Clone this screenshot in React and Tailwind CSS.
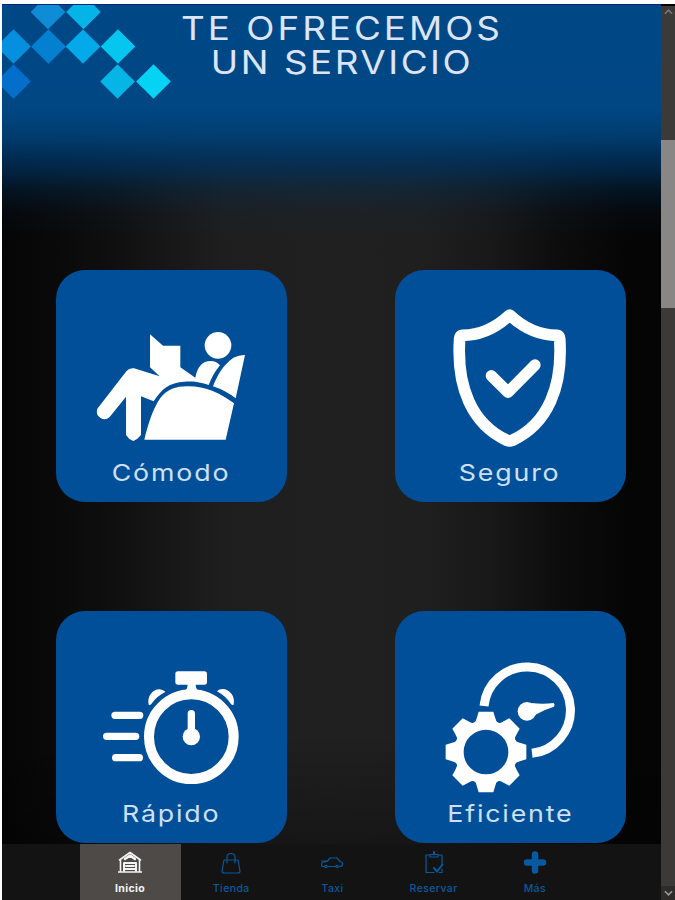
const diamonds = [
  { x: 46, y: 8, color: "#0e8dd6" },
  { x: 81.5, y: 8, color: "#04b4e6" },
  { x: 11.5, y: 42.5, color: "#0490de" },
  { x: 46.5, y: 42.5, color: "#0480d0" },
  { x: 81, y: 42.5, color: "#04a9ea" },
  { x: 116, y: 42.5, color: "#04c6ee" },
  { x: 11.5, y: 77.5, color: "#046fcb" },
  { x: 115.5, y: 77.5, color: "#04b5e6" },
  { x: 151.5, y: 77.5, color: "#04d3f3" },
];

const teeth = [0, 45, 90, 135, 180, 225, 270, 315];

function ComfortIcon() {
  return (
    <svg viewBox="17 30 693 564" className="block h-[188px] w-[231px]" fill="#fff">
      <circle cx="503" cy="256" r="40" />
      <path d="M299 223 L338 257 H390 V322 L435 353 C441 320 457 303 480 303 C494 303 504 309 509 316 C494 333 484 353 475 375 C445 365 425 364 402 365 C358 367 332 388 310 424 L272 409 V525 Q263 537 249 543 Q234 537 227 525 V410 L178 471 A23 23 0 0 1 141 446 L228 334 Q237 323 251 325 L328 349 L299 322 Z" />
      <path d="M584 285 Q568 284 549 293 C517 316 501 346 488 379 Q525 391 556 415 Z" />
      <path d="M282 539 C292 497 306 449 330 414 C350 388 377 379 410 379 C465 378 510 400 551 430 L526 539 Z" />
    </svg>
  );
}

function ShieldIcon() {
  return (
    <svg
      viewBox="14 30 693 564"
      className="block h-[188px] w-[231px]"
      fill="none"
      stroke="#fff"
      strokeWidth="35"
      strokeLinecap="round"
      strokeLinejoin="round"
    >
      <path d="M358 165 Q293 226 216 226 Q209 226 208 236 C198 380 244 492 350 541 Q358 545 366 541 C472 492 518 380 508 236 Q507 226 500 226 Q423 226 358 165 Z" />
      <path d="M303 347 L353 397 L434 315" strokeWidth="34" />
    </svg>
  );
}

function StopwatchIcon() {
  return (
    <svg viewBox="17 30 693 564" className="block h-[188px] w-[231px]" fill="#fff">
      <rect x="375" y="211" width="95" height="40" rx="8" />
      <path d="M412 248 H436 Q436 266 448 273 H400 Q412 266 412 248 Z" />
      <circle cx="423" cy="407" r="127" fill="none" stroke="#fff" strokeWidth="30" />
      <path d="M295 311 C287 276 325 251 345 273 Q318 286 303 309 Q299 314 295 311 Z" />
      <path d="M550 311 C558 276 520 251 500 271 Q527 286 542 309 Q546 314 550 311 Z" />
      <path d="M423 338 V407" stroke="#fff" strokeWidth="22" strokeLinecap="round" />
      <circle cx="423" cy="407" r="26" />
      <path
        d="M194 343 H268 M169 406 H256 M196 470 H267"
        stroke="#fff"
        strokeWidth="22"
        strokeLinecap="round"
      />
    </svg>
  );
}

function GaugeIcon() {
  return (
    <svg viewBox="14 30 693 564" className="block h-[188px] w-[231px]" fill="#fff">
      <path
        d="M281 315 A130 130 0 1 1 425 457"
        fill="none"
        stroke="#fff"
        strokeWidth="27"
      />
      <path d="M423 306 Q458 310 490 306 Q495 311 491 317 Q460 326 434 342 Z" />
      <circle cx="410" cy="331" r="28" />
      <g transform="translate(287 453)">
        <circle r="81" fill="none" stroke="#fff" strokeWidth="28" />
        {teeth.map((angle) => (
          <path
            key={angle}
            transform={`rotate(${angle})`}
            d="M-38 -84 Q-30 -90 -27 -104 L-22 -121 H22 L27 -104 Q30 -90 38 -84 Z"
          />
        ))}
      </g>
    </svg>
  );
}

const services = [
  { label: "Cómodo", icon: <ComfortIcon /> },
  { label: "Seguro", icon: <ShieldIcon /> },
  { label: "Rápido", icon: <StopwatchIcon /> },
  { label: "Eficiente", icon: <GaugeIcon /> },
];

const tabs = [
  {
    label: "Inicio",
    active: true,
    icon: (
      <g strokeWidth="1.6">
        <path d="M1.5 9 L12 1.5 L22.5 9 M2.5 8 V20 M21.5 8 V20 M0.5 21 H23.5" />
        <path d="M7 8 L12 4.5 L17 8" strokeWidth="2.5" />
        <path d="M6 20 V12 H18 V20 M8 15 H16 M7 18 H17" strokeWidth="2" />
      </g>
    ),
  },
  {
    label: "Tienda",
    icon: (
      <path d="M5 9 H19 L21 20 Q21 22 19 22 H5 Q3 22 3 20 Z M8 12 V6 Q8 2.5 12 2.5 Q16 2.5 16 6 V12" />
    ),
  },
  {
    label: "Taxi",
    icon: (
      <g>
        <path d="M4 15.5 H2 Q0.500 11.5 4 11 L7 10.5 L10 7 H17 L20 10.5 Q23 11 22.5 14 L21 15.5 H19 M1.500 10 H7 M8 15.5 H15" />
        <circle cx="6" cy="15.5" r="1.2" />
        <circle cx="17" cy="15.5" r="1.2" />
      </g>
    ),
  },
  {
    label: "Reservar",
    icon: (
      <g>
        <path d="M8 4 H4 V21.5 H12 M16 4 H20 V13 M8 3.5 H16 V6 H8 Z M17 21.5 H20 V18" />
        <path d="M12 1 V3.5" strokeWidth="2" />
        <path d="M12 17 L15 20.5 L20.5 13.5" strokeWidth="2" />
      </g>
    ),
  },
  {
    label: "Más",
    icon: <path d="M12 3.5 V19.5 M4 11.5 H20" strokeWidth="6.5" />,
  },
];

export default function App() {
  return (
    <div className="flex h-[900px] w-[675px] overflow-hidden bg-white pt-[4px] pl-[2px] font-[Inter,sans-serif]">
      <main className="flex w-[659px] flex-col bg-[linear-gradient(to_bottom,#004786_0,#004784_105px,#003e73ee_135px,#003566d0_152px,#00305eaa_168px,#00305c55_186px,#00305c1c_206px,#00305c00_232px,#00000000_730px,#0000004d_840px),linear-gradient(to_right,#050505_0,#0a0a0a_60px,#0f0f0f_110px,#171717_165px,#1e1e1e_220px,#202020_320px,#1f1f1f_420px,#181818_490px,#0d0d0d_555px,#050505_625px)]">
        <header className="flex h-[266px] shrink-0 border-t border-[#00247a]">
          <svg className="block h-[100px] w-[170px] shrink-0" viewBox="0 1 170 100">
            {diamonds.map((d) => (
              <path
                key={`${d.x}-${d.y}`}
                transform={`translate(${d.x} ${d.y})`}
                d="M0 -17.3 L17.3 0 L0 17.3 L-17.3 0 Z"
                fill={d.color}
              />
            ))}
          </svg>
          <h1 className="ml-[6px] w-[328px] scale-x-[1.15] pt-[7px] text-center text-[32px] leading-[34px] font-normal whitespace-nowrap text-[#dce4f6]">
            <span className="block tracking-[2.6px]">TE OFRECEMOS</span>
            <span className="block tracking-[2.2px]">UN SERVICIO</span>
          </h1>
        </header>

        <section className="grid grid-cols-[231px_231px] gap-x-[108px] gap-y-[109px] pl-[53.5px]">
          {services.map((service) => (
            <div
              key={service.label}
              className="flex h-[232px] flex-col items-center rounded-[29px] bg-[#004f98]"
            >
              {service.icon}
              <p className="scale-x-[1.14] text-[23.5px] leading-[30px] font-normal tracking-[1.6px] text-[#cde0f5]">
                {service.label}
              </p>
            </div>
          ))}
        </section>

        <nav className="mt-[1px] flex flex-1 bg-[#131313] pl-[77.5px]">
          {tabs.map((tab) => (
            <button
              key={tab.label}
              className={`flex w-[101.2px] flex-col items-center pt-[7px] ${
                tab.active ? "bg-[#4d4a47] text-[#f5f5f5]" : "text-[#075a9f]"
              }`}
            >
              <svg
                viewBox="0 0 24 24"
                className="h-6 w-6"
                fill="none"
                stroke="currentColor"
                strokeWidth="1.2"
                strokeLinecap="round"
                strokeLinejoin="round"
              >
                {tab.icon}
              </svg>
              <span
                className={`mt-[7px] text-[10.5px] leading-[14px] tracking-[0.4px] ${
                  tab.active ? "font-bold" : "font-medium"
                }`}
              >
                {tab.label}
              </span>
            </button>
          ))}
        </nav>
      </main>

      <div className="flex w-[14px] flex-col bg-[#3c3a38]">
        <div className="flex h-[14px] items-center justify-center border-t-2 border-black">
          <svg viewBox="0 0 10 6" className="h-[6px] w-[9px]" fill="none" stroke="#777" strokeWidth="1.8">
            <path d="M1 5 L5 1 L9 5" />
          </svg>
        </div>
        <div className="mt-[122px] h-[168px] bg-[#898785]" />
        <div className="mt-auto flex h-[14px] items-center justify-center bg-[#2d2c2b]">
          <svg viewBox="0 0 10 6" className="h-[6px] w-[9px]" fill="none" stroke="#999" strokeWidth="1.8">
            <path d="M1 1 L5 5 L9 1" />
          </svg>
        </div>
      </div>
    </div>
  );
}
